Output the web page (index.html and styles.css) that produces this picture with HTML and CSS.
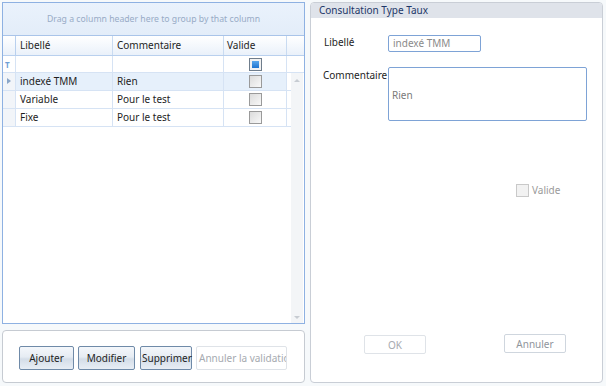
FILE: index.html
```html
<!DOCTYPE html>
<html lang="fr">
<head>
    <meta charset="UTF-8">
    <title>Consultation Type Taux</title>
    <link rel="stylesheet" href="styles.css">
</head>
<body>
    <div class="left">
        <div class="grid">
            <div class="group-panel">Drag a column header here to group by that column</div>
            <div class="row header">
                <div class="ind"></div>
                <div class="c1">Libellé</div>
                <div class="c2">Commentaire</div>
                <div class="c3">Valide</div>
                <div class="c4"></div>
            </div>
            <div class="row filter">
                <div class="ind"><span class="funnel">T</span></div>
                <div class="c1"></div>
                <div class="c2"></div>
                <div class="c3"><span class="check indet"></span></div>
                <div class="c4"></div>
            </div>
            <div class="body">
                <div class="rows">
                    <div class="row current">
                        <div class="ind"><span class="arrow"></span></div>
                        <div class="c1">indexé TMM</div>
                        <div class="c2">Rien</div>
                        <div class="c3"><span class="check"></span></div>
                    </div>
                    <div class="row">
                        <div class="ind"></div>
                        <div class="c1">Variable</div>
                        <div class="c2">Pour le test</div>
                        <div class="c3"><span class="check"></span></div>
                    </div>
                    <div class="row">
                        <div class="ind"></div>
                        <div class="c1">Fixe</div>
                        <div class="c2">Pour le test</div>
                        <div class="c3"><span class="check"></span></div>
                    </div>
                </div>
                <div class="scrollbar">
                    <span class="up"></span>
                    <span class="down"></span>
                </div>
            </div>
        </div>
        <div class="actions">
            <button class="btn">Ajouter</button>
            <button class="btn">Modifier</button>
            <button class="btn">Supprimer</button>
            <button class="btn disabled">Annuler la validation</button>
        </div>
    </div>

    <div class="detail">
        <div class="detail-title">Consultation Type Taux</div>
        <div class="form">
            <div class="field">
                <label>Libellé</label>
                <div class="input">indexé TMM</div>
            </div>
            <div class="field">
                <label>Commentaire</label>
                <div class="textarea">Rien</div>
            </div>
            <div class="valide"><span class="check"></span>Valide</div>
            <div class="form-buttons">
                <button class="btn disabled ok">OK</button>
                <button class="btn disabled cancel">Annuler</button>
            </div>
        </div>
    </div>
</body>
</html>
```

FILE: styles.css
```css
body {
    margin: 0;
    width: 606px;
    height: 386px;
    padding: 2px 3px 0 2px;
    box-sizing: border-box;
    display: flex;
    gap: 5px;
    font-family: "Noto Sans", "Open Sans", sans-serif;
    font-size: 10px;
    color: #1e1e1e;
    background-color: #f6f9fb;
    overflow: hidden;
}
.left {
    width: 303px;
    display: flex;
    flex-direction: column;
    gap: 6px;
}
.grid {
    height: 322px;
    border: 1px solid #8eb1e2;
    background-color: white;
    display: flex;
    flex-direction: column;
    box-sizing: border-box;
}
.group-panel {
    height: 32px;
    line-height: 32px;
    text-align: center;
    color: #98abc6;
    font-size: 8.7px;
    background: linear-gradient(#eaf2fc, #e3edf9);
    border-bottom: 1px solid #a9c4e9;
    flex-shrink: 0;
}
.row {
    display: flex;
    height: 18px;
    line-height: 17px;
    border-bottom: 1px solid #d6e3f4;
    box-sizing: border-box;
    flex-shrink: 0;
}
.row > div {
    box-sizing: border-box;
    padding-left: 4px;
    white-space: nowrap;
}
.ind {
    width: 13px;
    flex-shrink: 0;
    background-color: #f2f5f9;
    border-right: 1px solid #d6e3f4;
    position: relative;
}
.c1 { width: 97px; border-right: 1px solid #d6e3f4; }
.c2 { width: 111px; border-right: 1px solid #d6e3f4; }
.c3 { width: 63px; border-right: 1px solid #d6e3f4; text-align: center; padding-left: 0 !important; }
.c4 { flex: 1; }
.header {
    height: 20px;
    line-height: 19px;
    background: linear-gradient(#ffffff, #eaf1fa);
    border-bottom: 1px solid #b9d0ee;
}
.header .ind {
    background: none;
    border-right: 1px solid #b9d0ee;
}
.header .c1, .header .c2, .header .c3 {
    border-right: 1px solid #c9dbf1;
}
.header .c3 { text-align: left; padding-left: 3px !important; }
.filter {
    height: 17px;
    line-height: 16px;
}
.filter .ind { background: none; }
.funnel {
    color: #6f9fd6;
    font-size: 8px;
    font-weight: bold;
    position: absolute;
    left: 2px;
    top: 1px;
}
.body {
    flex: 1;
    display: flex;
}
.rows {
    flex: 1;
    display: flex;
    flex-direction: column;
}
.rows .row { width: 288px; }
.current .c1, .current .c2, .current .c3 {
    background-color: #e6f0fb;
}
.arrow {
    position: absolute;
    left: 4px;
    top: 5px;
    border-left: 4px solid #8aa6c8;
    border-top: 3px solid transparent;
    border-bottom: 3px solid transparent;
}
.check {
    display: inline-block;
    width: 11px;
    height: 11px;
    border: 1px solid #9a9a9a;
    background: linear-gradient(135deg, #dcdcdc, #f8f8f8);
    vertical-align: middle;
    position: relative;
    top: -1px;
}
.check.indet {
    border-color: #6f7d8c;
    background: #f2f2f2;
}
.check.indet::after {
    content: "";
    position: absolute;
    left: 2px;
    top: 2px;
    width: 7px;
    height: 7px;
    background: linear-gradient(#5aa7ec, #1f74cf);
}
.scrollbar {
    width: 12px;
    background-color: #f3f5f7;
    margin-right: 1px;
    position: relative;
}
.up, .down {
    position: absolute;
    left: 3px;
    border-left: 3px solid transparent;
    border-right: 3px solid transparent;
}
.up { top: 6px; border-bottom: 3px solid #c7ccd2; }
.down { bottom: 4px; border-top: 3px solid #c7ccd2; }
.actions {
    height: 53px;
    border: 1px solid #c6cbd2;
    border-radius: 4px;
    background-color: white;
    box-sizing: border-box;
    display: flex;
    align-items: center;
    padding: 2px 0 0 16px;
    gap: 4px;
}
.btn {
    font-family: "Noto Sans", "Open Sans", sans-serif;
    font-size: 10px;
    height: 24px;
    padding: 0 4px;
    border: 1px solid #6f8aa8;
    border-radius: 2px;
    background: linear-gradient(#f4f7fb 0%, #e6ecf3 45%, #d4dde8 55%, #e8eef5 100%);
    color: #1e1e1e;
}
.actions .btn:nth-child(1) { width: 55px; }
.actions .btn:nth-child(2) { width: 57px; }
.actions .btn:nth-child(3) { width: 52px; margin-left: 1px; padding: 0 1px; }
.actions .btn:nth-child(4) { width: 91px; padding: 0 2px; overflow: hidden; white-space: nowrap; text-align: left; }
.btn.disabled {
    border-color: #dfe3e8;
    background: white;
    color: #a6aab0;
}
.detail {
    flex: 1;
    border: 1px solid #c9ced6;
    border-radius: 4px;
    background-color: white;
    display: flex;
    flex-direction: column;
    height: 381px;
    box-sizing: border-box;
}
.detail-title {
    height: 15px;
    line-height: 14px;
    background-color: #dfe3ea;
    color: #1d3768;
    padding-left: 8px;
    border-radius: 3px 3px 0 0;
}
.form {
    flex: 1;
    display: flex;
    flex-direction: column;
    padding: 17px 15px 0 13px;
}
.field {
    display: flex;
}
.field label {
    width: 64px;
    padding-top: 0;
}
.input {
    width: 93px;
    height: 17px;
    line-height: 15px;
    border: 1px solid #7ea3d6;
    border-radius: 2px;
    box-sizing: border-box;
    padding-left: 4px;
    color: #8a8a8a;
}
.field + .field {
    margin-top: 15px;
}
.field + .field label { margin-left: -1px; width: 65px; padding-top: 1px; }
.textarea {
    width: 199px;
    height: 54px;
    border: 1px solid #7ea3d6;
    border-radius: 2px;
    box-sizing: border-box;
    padding: 20px 0 0 3px;
    color: #7a7a7a;
}
.valide {
    margin: 62px 0 0 192px;
    color: #9a9a9a;
    display: flex;
    align-items: center;
    gap: 3px;
}
.valide .check {
    border-color: #c9c9c9;
    background: #f2f2f2;
    top: 0;
}
.form-buttons {
    display: flex;
    justify-content: space-between;
    margin: 138px 21px 0 40px;
}
.form-buttons .btn {
    width: 62px;
    height: 19px;
}
.form-buttons .cancel {
    border-color: #cfd6de;
    color: #8f959c;
    position: relative;
    top: -1px;
}
```
